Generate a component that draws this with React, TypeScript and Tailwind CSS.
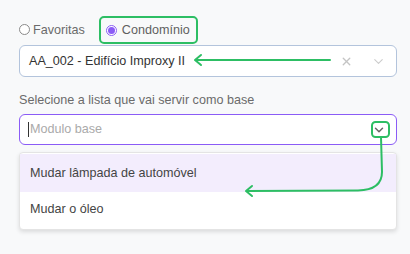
import { ChevronDown, X } from 'lucide-react'

const options = ['Mudar lâmpada de automóvel', 'Mudar o óleo']

export default function App() {
  return (
    <div className="relative min-h-screen w-[410px] h-[254px] bg-[#f8f9fa] font-['Liberation_Sans',Arial,sans-serif] text-[12.6px]">
      <div className="w-[378px] ml-[19px] pt-[16px]">
        {/* Radio group */}
        <div className="flex items-center h-[28px]">
          <label className="flex items-center gap-[3px] text-[#6b6b6b]">
            <span className="w-[11px] h-[11px] rounded-full border border-[#8a8a8a] bg-white" />
            <span>Favoritas</span>
          </label>
          <label className="ml-[14px] flex items-center gap-[5px] w-[99px] h-[28px] pl-[5px] border-2 border-[#2dbe64] rounded-[5px] text-[#5f5f5f]">
            <span className="w-[11px] h-[11px] rounded-full border border-[#8b5cf6] flex items-center justify-center bg-white">
              <span className="w-[7px] h-[7px] rounded-full bg-[#8b5cf6]" />
            </span>
            <span>Condomínio</span>
          </label>
        </div>

        {/* Select condominio */}
        <div className="mt-[1px] h-[32px] flex items-center bg-white border border-[#b3c4dc] rounded-[6px] pl-[9px] pr-[10px]">
          <span className="flex-1 text-[#333]">AA_002 - Edifício Improxy II</span>
          <X className="w-[13px] h-[13px] text-[#c4c4c4] mr-[18px]" strokeWidth={2.5} />
          <ChevronDown className="w-[15px] h-[15px] text-[#cccccc]" strokeWidth={1.75} />
        </div>

        {/* Base list */}
        <div className="mt-[16px] text-[#6b6b6b] leading-[15px]">Selecione a lista que vai servir como base</div>
        <div className="mt-[6px] h-[31px] flex items-center bg-white border-[1.5px] border-[#8b5cf6] rounded-[6px] pl-[8px] pr-[10px]">
          <span className="w-px h-[15px] bg-[#333]" />
          <span className="flex-1 ml-px text-[#aaa]">Modulo base</span>
          <ChevronDown className="w-[14px] h-[14px] text-[#666]" strokeWidth={2.5} />
        </div>

        {/* Dropdown */}
        <div className="mt-[7px] bg-white rounded-[4px] border border-[#e4e4e4] shadow-[0_2px_4px_rgba(0,0,0,0.12)] pt-px pb-[3px]">
          <div className="h-[38px] flex items-center pl-[10px] text-[#444] bg-[#f3edfd]">{options[0]}</div>
          <div className="h-[34px] flex items-center pl-[10px] text-[#444]">{options[1]}</div>
        </div>
      </div>

      {/* Annotation arrows */}
      <svg className="absolute inset-0 pointer-events-none" width="410" height="254" fill="none" stroke="#2dbe64" strokeWidth="2" strokeLinecap="round" strokeLinejoin="round">
        <path d="M330 60 H196" />
        <path d="M201 55 L195 60 L201 65" />
        <rect x="372" y="122" width="17" height="15" rx="3.5" />
        <path d="M381 137 L382 172 Q382 190 358 190.5 L247 191" />
        <path d="M252 186 L246 191 L252 196" />
      </svg>
    </div>
  )
}
